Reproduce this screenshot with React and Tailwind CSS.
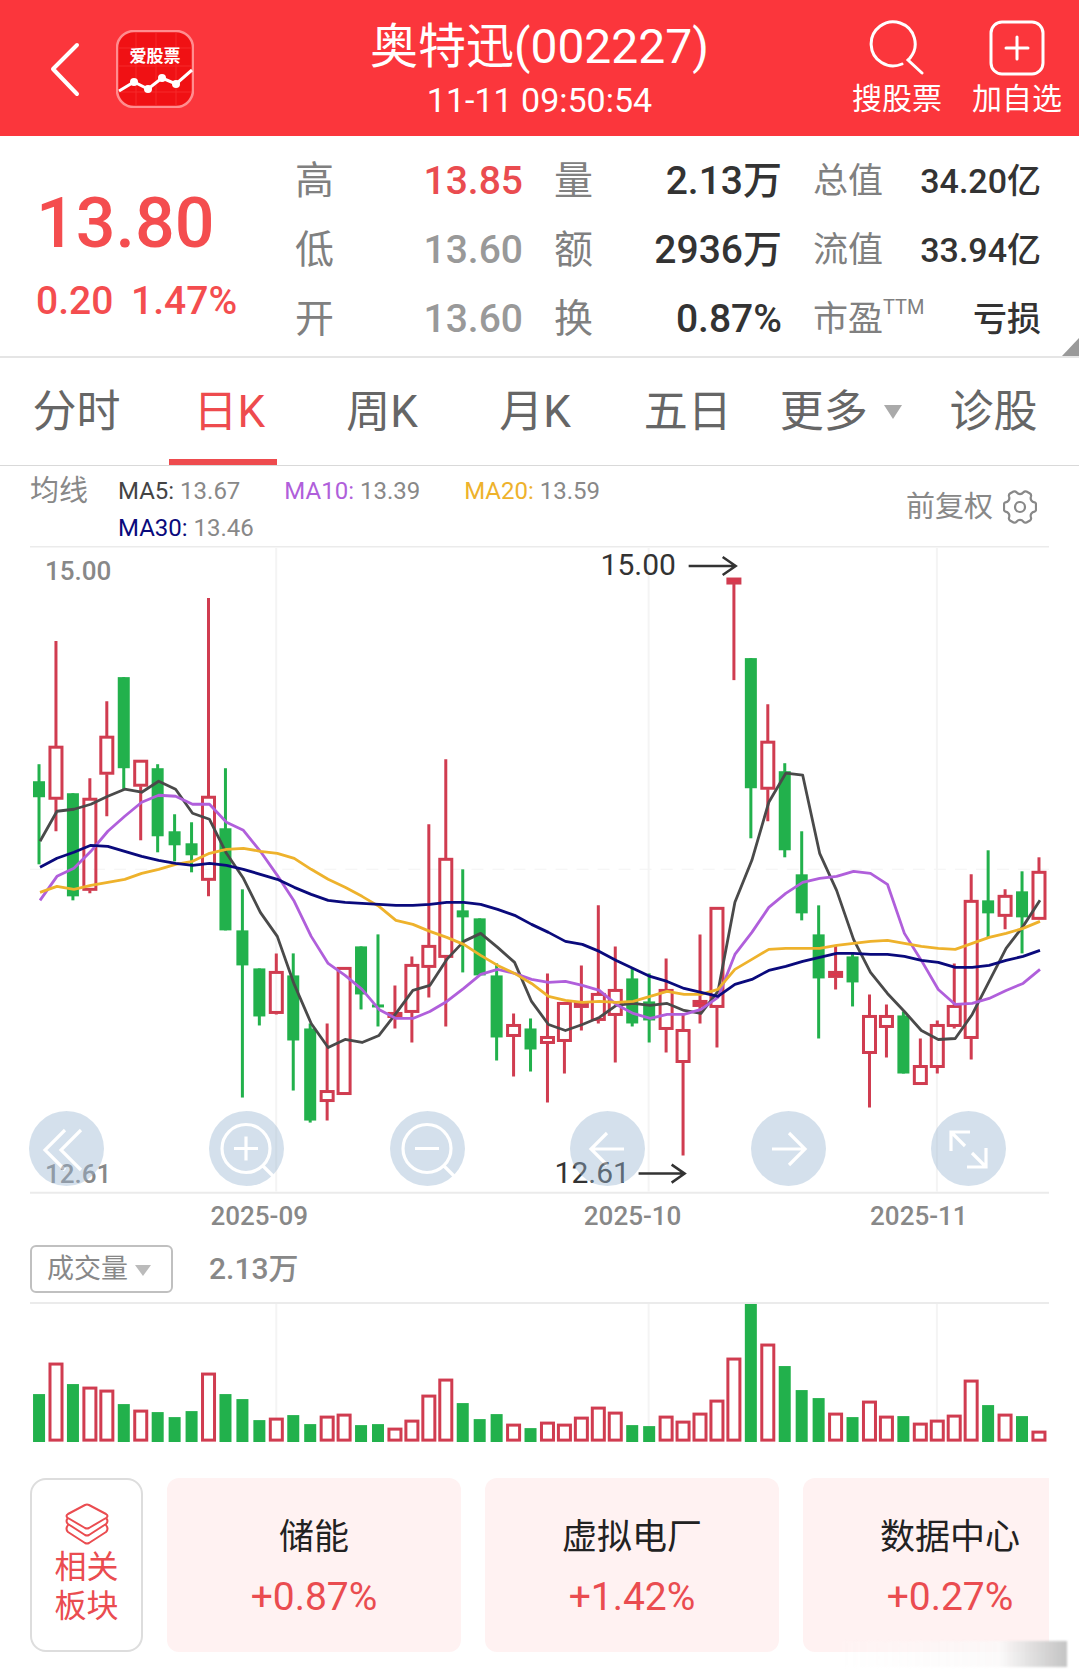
import React, { useState } from 'react';

const UP = '#d03c50';
const DOWN = '#22b14c';

// [direction, high, body top, body bottom, low, volume height]
const candles = [
  ['d', 764, 781, 797, 864, 48], ['u', 641, 746, 799, 831, 79], ['d', 793, 793, 896, 900, 58],
  ['u', 778, 798, 890, 893, 55], ['u', 701, 736, 774, 816, 52], ['d', 677, 677, 768, 789, 38],
  ['u', 760, 760, 786, 840, 32], ['d', 764, 768, 836, 852, 30], ['d', 814, 831, 845, 861, 25],
  ['d', 822, 843, 855, 872, 31], ['u', 598, 796, 880, 896, 69], ['d', 768, 828, 930, 930, 48],
  ['d', 889, 930, 965, 1097, 43], ['d', 968, 968, 1016, 1025, 22], ['u', 953, 971, 1013, 1014, 24],
  ['d', 953, 975, 1040, 1090, 27], ['d', 1023, 1028, 1120, 1122, 18], ['u', 1023, 1090, 1101, 1120, 26],
  ['u', 967, 967, 1094, 1094, 28], ['d', 946, 946, 994, 1009, 17], ['d', 934, 1004, 1007, 1026, 18],
  ['u', 985, 1012, 1017, 1028, 14], ['u', 956, 964, 1012, 1042, 22], ['u', 824, 945, 967, 997, 47],
  ['u', 759, 858, 957, 1026, 63], ['d', 869, 910, 917, 972, 39], ['d', 918, 918, 975, 975, 23],
  ['d', 963, 975, 1037, 1060, 28], ['u', 1013, 1024, 1036, 1076, 18], ['d', 1018, 1028, 1049, 1071, 14],
  ['u', 973, 1036, 1043, 1102, 20], ['u', 1002, 1002, 1041, 1073, 18], ['u', 965, 1002, 1007, 1030, 25],
  ['u', 905, 993, 1020, 1023, 35], ['u', 946, 989, 1015, 1062, 30], ['d', 968, 978, 1023, 1026, 17],
  ['d', 973, 1001, 1020, 1042, 16], ['u', 958, 989, 1029, 1052, 26], ['u', 1013, 1029, 1062, 1155, 21],
  ['u', 934, 1000, 1006, 1023, 29], ['u', 907, 907, 1007, 1047, 42], ['u', 578, 578, 584, 680, 84],
  ['d', 658, 658, 788, 838, 138], ['u', 704, 741, 789, 821, 98], ['d', 763, 771, 850, 857, 76],
  ['d', 831, 874, 913, 920, 52], ['d', 905, 934, 978, 1038, 44], ['u', 945, 971, 977, 989, 29],
  ['d', 952, 956, 982, 1006, 25], ['u', 994, 1015, 1053, 1107, 41], ['u', 1004, 1015, 1027, 1057, 26],
  ['d', 1011, 1015, 1073, 1073, 26], ['u', 1038, 1065, 1084, 1084, 19], ['u', 1020, 1024, 1067, 1073, 22],
  ['u', 963, 1005, 1026, 1028, 27], ['u', 874, 900, 1038, 1059, 62], ['d', 850, 900, 913, 937, 37],
  ['u', 889, 895, 916, 929, 28], ['d', 871, 891, 917, 953, 26], ['u', 857, 871, 919, 919, 11],
];

const averages = [
  {
    name: 'MA5', value: '13.67', color: '#4a4a4a', label: 'text-[#444444]',
    points: [841, 811, 809, 804, 796, 789, 792, 781, 789, 813, 819, 853, 878, 912, 936, 984, 1023, 1047, 1039, 1042, 1035, 1013, 990, 985, 959, 941, 933, 947, 962, 1001, 1024, 1030, 1024, 1017, 1005, 1003, 1005, 1003, 1010, 1013, 991, 902, 860, 802, 773, 775, 853, 890, 939, 972, 993, 1011, 1030, 1039, 1038, 1014, 981, 948, 926, 900],
  },
  {
    name: 'MA10', value: '13.39', color: '#b05fdb', label: 'text-[#b05fdb]',
    points: [900, 876, 868, 851, 831, 816, 802, 795, 796, 804, 804, 822, 830, 851, 875, 901, 936, 963, 975, 989, 1009, 1018, 1018, 1011, 1001, 988, 974, 969, 973, 979, 982, 981, 985, 990, 1004, 1013, 1018, 1014, 1014, 1009, 997, 954, 932, 907, 893, 882, 878, 876, 871, 873, 884, 933, 960, 989, 1004, 1003, 998, 990, 983, 969],
  },
  {
    name: 'MA20', value: '13.59', color: '#eeb22c', label: 'text-[#eeb22c]',
    points: [892, 886, 889, 885, 882, 879, 873, 869, 864, 861, 853, 849, 848, 851, 853, 858, 869, 879, 887, 896, 906, 920, 924, 931, 937, 944, 955, 965, 973, 983, 996, 1000, 1002, 1001, 1002, 1001, 996, 991, 994, 994, 989, 969, 959, 949, 948, 948, 948, 945, 943, 941, 940, 943, 946, 948, 949, 943, 937, 933, 928, 921],
  },
  {
    name: 'MA30', value: '13.46', color: '#0a0a7c', label: 'text-[#0a0a7c]',
    points: [867, 858, 852, 845, 846, 851, 856, 860, 863, 865, 863, 865, 869, 874, 879, 887, 894, 900, 902, 903, 904, 905, 905, 904, 902, 902, 904, 909, 915, 924, 932, 941, 944, 951, 960, 968, 976, 981, 988, 992, 996, 984, 979, 970, 966, 961, 957, 953, 953, 954, 954, 956, 960, 962, 967, 967, 965, 960, 956, 950],
  },
];

const months = [
  { label: '2025-09', line: 276, x: 259 },
  { label: '2025-10', line: 648, x: 632 },
  { label: '2025-11', line: 936, x: 918 },
];

const tabs = ['分时', '日K', '周K', '月K', '五日', '更多', '诊股'];

const sectors = [
  { name: '储能', change: '+0.87%' },
  { name: '虚拟电厂', change: '+1.42%' },
  { name: '数据中心', change: '+0.27%' },
];

const candleX = (i) => 39 + (i * 999) / 59;

function Quote({ label, value, sup, color = 'text-[#333333]', small }) {
  return (
    <div className="flex items-center justify-between">
      <dt className={`relative text-[#808080] ${small ? 'text-[35px]' : 'text-[39px]'}`}>
        {label}
        {sup && <span className="absolute left-full top-[12px] text-[20px] leading-[20px]">{sup}</span>}
      </dt>
      <dd className={`font-medium ${color} ${small ? 'text-[34px]' : 'text-[39px]'}`}>{value}</dd>
    </div>
  );
}

function Header() {
  return (
    <header className="flex h-[136px] items-start justify-between bg-[#fb363c] text-white">
      <div className="flex w-[300px] gap-[36px] pl-[50px] pt-[30px]">
        <button type="button" aria-label="返回" className="h-[78px]">
          <svg width="30" height="56" viewBox="0 0 30 56" fill="none" stroke="currentColor" strokeWidth="4" strokeLinecap="round" strokeLinejoin="round">
            <path d="M27 4 3 28l24 25" />
          </svg>
        </button>
        <svg width="78" height="78" viewBox="0 0 78 78">
          <rect x="1" y="1" width="76" height="76" rx="17" fill="#f01114" stroke="#ff8d8f" strokeWidth="2.5" />
          <path d="M20 3v72M40 3v72M60 3v72M3 18h72M3 36h72M3 62h72" stroke="#fb3b3b" strokeWidth="1" opacity=".6" />
          <text x="39" y="32" textAnchor="middle" fontSize="17" fontWeight="700" fill="#fff" fontFamily="Noto Sans CJK SC, sans-serif">爱股票</text>
          <path d="M3 61 18 52l14 7 14-11 14 6 16-14" fill="none" stroke="#fff" strokeWidth="3" />
          <circle cx="18" cy="52" r="4" fill="#fff" />
          <circle cx="32" cy="59" r="4" fill="#fff" />
          <circle cx="46" cy="48" r="4" fill="#fff" />
          <circle cx="60" cy="54" r="4" fill="#fff" />
        </svg>
      </div>
      <div className="pt-[18px] text-center">
        <h1 className="text-[48px] leading-[58px]">奥特迅(002227)</h1>
        <p className="text-[34px] leading-[48px]">11-11 09:50:54</p>
      </div>
      <div className="flex w-[300px] justify-end gap-[30px] pr-[17px] pt-[20px] text-[30px] leading-[40px]">
        <button type="button" className="flex flex-col items-center gap-[3px]">
          <svg width="56" height="56" viewBox="0 0 56 56" fill="none" stroke="currentColor" strokeWidth="3" strokeLinecap="round">
            <path d="M33 44A22 22 0 1 1 41 38L39 40 53 53" />
          </svg>
          搜股票
        </button>
        <button type="button" className="flex flex-col items-center gap-[3px]">
          <svg width="56" height="56" viewBox="0 0 56 56" fill="none" stroke="currentColor" strokeWidth="3" strokeLinecap="round">
            <rect x="2" y="2" width="52" height="52" rx="11" />
            <path d="M28 17v22M17 28h22" />
          </svg>
          加自选
        </button>
      </div>
    </header>
  );
}

function Summary() {
  return (
    <section className="relative flex h-[222px] border-b-2 border-[#e5e5e5] pl-[36px] pr-[38px]">
      <div className="w-[259px] shrink-0 pt-[49px] font-medium text-[#f44d4f]">
        <p className="text-[70px] leading-[76px]">13.80</p>
        <p className="pt-[16px] text-[39px] leading-[48px]">
          <span>0.20</span> <span className="pl-[8px]">1.47%</span>
        </p>
      </div>
      <div className="grid flex-1 grid-cols-3 content-start gap-x-[31px] pt-[11px] leading-[69px]">
        <dl>
          <Quote label="高" value="13.85" color="text-[#ea4c50]" />
          <Quote label="低" value="13.60" color="text-[#999999]" />
          <Quote label="开" value="13.60" color="text-[#999999]" />
        </dl>
        <dl>
          <Quote label="量" value="2.13万" />
          <Quote label="额" value="2936万" />
          <Quote label="换" value="0.87%" />
        </dl>
        <dl>
          <Quote small label="总值" value="34.20亿" />
          <Quote small label="流值" value="33.94亿" />
          <Quote small label="市盈" sup="TTM" value="亏损" />
        </dl>
      </div>
      <svg className="absolute bottom-0 right-0" width="17" height="18" viewBox="0 0 17 18">
        <path d="M17 0v18H0z" fill="#999" />
      </svg>
    </section>
  );
}

function KLineChart() {
  return (
    <svg className="block w-full" viewBox="30 546 1018 690" fontFamily="Roboto, sans-serif">
      <path d="M30 546.500H1048M30 1192H1048" stroke="#ebebeb" strokeWidth="2" />
      <path d="M30 869H1048" stroke="#f3f3f3" strokeWidth="1" strokeDasharray="12 9" />
      {months.map((m) => (
        <g key={m.label}>
          <path d={`M${m.line} 548V1191`} stroke="#f4f4f4" strokeWidth="2" />
          <text x={m.x} y="1224" textAnchor="middle" fontSize="26" fontWeight="500" fill="#888">{m.label}</text>
        </g>
      ))}
      <g fontSize="26" fontWeight="500" fill="#888">
        <text x="45" y="580">15.00</text>
        <text x="45" y="1182">12.61</text>
      </g>
      {candles.map(([dir, high, top, bottom, low], i) => {
        const x = candleX(i);
        if (dir === 'd') {
          return (
            <g key={i} fill={DOWN}>
              <rect x={x - 1.5} y={high} width="3" height={low - high} />
              <rect x={x - 6} y={top} width="12" height={bottom - top} />
            </g>
          );
        }
        return (
          <g key={i} stroke={UP} strokeWidth="3" fill="none">
            <path d={`M${x} ${high}V${top}M${x} ${bottom}V${low}`} />
            <rect x={x - 6} y={top + 1} width="12" height={bottom - top - 2} fill={bottom - top < 7 ? '#e8324a' : 'none'} />
          </g>
        );
      })}
      {averages.map((ma) => (
        <polyline
          key={ma.name}
          points={ma.points.map((y, i) => `${candleX(i) + 1},${y}`).join(' ')}
          fill="none"
          stroke={ma.color}
          strokeWidth="2.8"
          strokeLinejoin="round"
        />
      ))}
      <g fontSize="30" fill="#333">
        <text x="600" y="575">15.00</text>
        <text x="554" y="1182">12.61</text>
      </g>
      <path d="M688 566H735M722 557 735 566 722 575M638 1173H684M671 1164 684 1173 671 1182" fill="none" stroke="#333" strokeWidth="2.5" />
    </svg>
  );
}

const controls = [
  { label: '最早', path: 'M36 19 16 39 36 59M52 19 32 39 52 59' },
  { label: '放大', path: 'M37 13.5a24 24 0 1 1 0 48a24 24 0 1 1 0-48M25 37.5h24M37 25.5v24M54 55 65 66' },
  { label: '缩小', path: 'M37 13.5a24 24 0 1 1 0 48a24 24 0 1 1 0-48M25 37.5h24M54 55 65 66' },
  { label: '左移', path: 'M54 38H21M37 22 21 38 37 54' },
  { label: '右移', path: 'M21 38H54M38 22 54 38 38 54' },
  { label: '全屏', path: 'M39 21H20V40M20 21 34 35M36 56H55V37M55 56 41 42' },
];

function VolumeChart() {
  return (
    <svg className="block w-full" viewBox="30 1302 1018 140">
      <path d="M30 1303H1048" stroke="#ebebeb" strokeWidth="2" />
      {months.map((m) => (
        <path key={m.label} d={`M${m.line} 1304V1440`} stroke="#f4f4f4" strokeWidth="2" />
      ))}
      {candles.map(([dir, , , , , vol], i) =>
        dir === 'd' ? (
          <rect key={i} x={candleX(i) - 6} y={1442 - vol} width="12" height={vol} fill={DOWN} />
        ) : (
          <rect key={i} x={candleX(i) - 6} y={1443 - vol} width="12" height={vol - 3} fill="#fff" stroke={UP} strokeWidth="3" />
        )
      )}
    </svg>
  );
}

function App() {
  const [tab, setTab] = useState('日K');

  return (
    <div className="relative overflow-hidden bg-white pb-[27px] font-[Roboto,'Noto_Sans_CJK_SC',sans-serif]">
      <Header />
      <Summary />

      {/* Period tabs */}
      <nav className="grid h-[108px] grid-cols-7 border-b border-[#d9d9d9] pr-[9px] text-[44px]">
        {tabs.map((t) => (
          <button
            key={t}
            type="button"
            onClick={() => setTab(t)}
            className={`relative flex items-center justify-center gap-[16px] ${t === tab ? 'text-[#ee4b4e]' : 'text-[#666666]'}`}
          >
            {t}
            {t === '更多' && (
              <svg width="18" height="14" viewBox="0 0 18 14"><path d="M0 0h18L9 14z" fill="#aaa" /></svg>
            )}
            {t === tab && <span className="absolute bottom-0 left-4 h-[6px] w-[108px] bg-[#ee4b4e]" />}
          </button>
        ))}
      </nav>

      <main className="px-[30px]">
        {/* Moving average legend */}
        <div className="flex h-[80px] items-start pr-[12px] text-[#888888]">
          <span className="w-[88px] shrink-0 pt-[5px] text-[29px] leading-[40px]">均线</span>
          <ul className="flex w-[540px] flex-wrap gap-x-[44px] pt-[7px] text-[24px] leading-[37px]">
            {averages.map((ma) => (
              <li key={ma.name}>
                <span className={ma.label}>{ma.name}:</span> {ma.value}
              </li>
            ))}
          </ul>
          <button type="button" className="ml-auto flex items-center gap-[10px] pt-[21px] text-[29px] leading-[40px]">
            前复权
            <svg width="34" height="34" viewBox="0 0 34 34" fill="none" stroke="currentColor" strokeWidth="2.2" strokeLinejoin="round">
              <path d="M10.500 1.500q1.800-.6 3 .8q1.500 1.800 3.500 1.800t3.500-1.800q1.200-1.400 3-.8l3.500 2q1.500 1 1 2.800q-.8 2.300.3 4t3.200 2q1.500.5 1.500 2v5.400q0 1.500-1.500 2q-2.100.3-3.200 2t-.3 4q.5 1.800-1 2.800l-3.500 2q-1.800.6-3-.8q-1.500-1.800-3.500-1.800t-3.500 1.800q-1.200 1.400-3 .8l-3.500-2q-1.500-1-1-2.800q.8-2.300-.3-4t-3.200-2q-1.500-.5-1.500-2v-5.400q0-1.500 1.500-2q2.100-.3 3.200-2t.3-4q-.5-1.800 1-2.800z" />
              <circle cx="17" cy="17" r="5" />
            </svg>
          </button>
        </div>

        <div className="relative">
          <KLineChart />
          <div className="absolute inset-x-[-1px] bottom-[51px] flex justify-between pr-[44px]">
            {controls.map((c) => (
              <button key={c.label} type="button" aria-label={c.label} className="size-[75px] rounded-full bg-[#9bb7d2] opacity-[0.42]">
                <svg viewBox="0 0 75 75" fill="none" stroke="#fff" strokeWidth="3.2">
                  <path d={c.path} />
                </svg>
              </button>
            ))}
          </div>
        </div>

        <div className="flex h-[65px] items-center gap-[36px] pb-[1px] text-[#888888]">
          <label className="relative">
            <select aria-label="指标" className="h-[48px] w-[143px] appearance-none rounded-md border-2 border-[#c0c0c0] bg-white pl-[15px] text-[27px] leading-[40px]">
              <option>成交量</option>
            </select>
            <svg className="pointer-events-none absolute right-[22px] top-[20px]" width="16" height="11" viewBox="0 0 16 11"><path d="M0 0h16L8 11z" fill="#bbb" /></svg>
          </label>
          <span className="text-[30px] font-medium">2.13万</span>
        </div>

        <VolumeChart />

        {/* Related sectors */}
        <div className="mt-[36px] flex gap-[24px] overflow-hidden">
          <button type="button" className="flex h-[174px] w-[113px] shrink-0 flex-col items-center rounded-2xl border-2 border-[#dddddd] pt-[23px] text-[32px] leading-[39px] text-[#ea4c50]">
            <svg className="mb-[3px]" width="44" height="42" viewBox="0 0 44 42" fill="none" stroke="currentColor" strokeWidth="2" strokeLinejoin="round">
              <path d="M20 2q2-1 4 0l17 9q3 2 0 4L24 25q-2 1-4 0L3 15q-3-2 0-4z" />
              <path d="M3 15q-3 3 0 6l17 11q2 1 4 0l17-11q3-3 0-6M3 22q-3 4 0 7l17 11q2 1 4 0l17-11q3-3 0-7" />
            </svg>
            <span>相关</span>
            <span>板块</span>
          </button>
          {sectors.map((s) => (
            <a key={s.name} href="#" className="flex h-[174px] w-[294px] shrink-0 flex-col items-center rounded-xl bg-[#fff2f2] pt-[35px]">
              <span className="text-[35px] leading-[50px] text-[#222222]">{s.name}</span>
              <span className="pt-[9px] text-[39px] leading-[50px] text-[#ea4c50]">{s.change}</span>
            </a>
          ))}
        </div>
      </main>

      {/* Soft shade in the corner */}
      <div className="absolute bottom-[12px] right-[12px] h-[26px] w-[226px] bg-linear-to-r from-white/10 via-[#fbf9f9]/80 via-70% to-[#c4c4c4] blur-[1px]" />
    </div>
  );
}

export default App;
